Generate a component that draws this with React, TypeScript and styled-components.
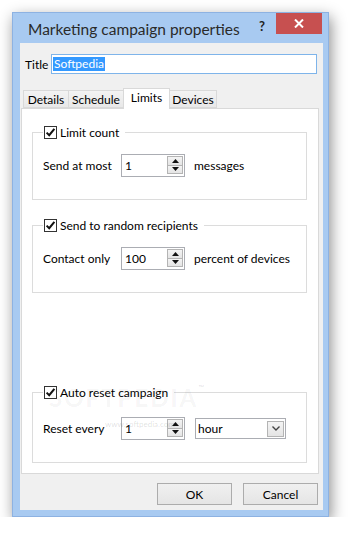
import React from 'react';
import styled, { createGlobalStyle } from 'styled-components';

const GlobalStyle = createGlobalStyle`
  html, body { margin: 0; padding: 0; background: #fff; }
  body { font-family: Lato, "Noto Sans", sans-serif; font-size: 12px; color: #000; }
  * { box-sizing: border-box; }
`;

// --- window frame ---
const Page = styled.div`
  padding: 12px 0 0 12px;
`;

const Window = styled.div`
  position: relative;
  width: 317px;
  height: 505px;
  display: flex;
  flex-direction: column;
  background: #a8caf1;
  border: 1px solid #8db2e2;
  box-shadow: 2px 5px 14px rgba(0, 0, 0, 0.45);
`;

const TitleBar = styled.div`
  height: 30px;
  display: flex;
  align-items: flex-start;
  padding-left: 15px;
`;

const Caption = styled.div`
  flex: 1;
  font-size: 15.5px;
  line-height: 30px;
  padding-top: 1px;
  color: #2a2a2a;
`;

const HelpButton = styled.div`
  margin: 5px 11px 0 0;
  font-size: 13px;
  font-weight: 700;
  color: #222;
`;

const CloseButton = styled.div`
  width: 46px;
  height: 21px;
  margin-right: 6px;
  background: #c75050;
  display: flex;
  align-items: center;
  justify-content: center;
`;

const Client = styled.div`
  flex: 1;
  margin: 0 5px 6px 7px;
  background: #f0f0f0;
  display: flex;
  flex-direction: column;
`;

// --- title row ---
const TitleRow = styled.div`
  display: flex;
  align-items: center;
  padding: 11px 6px 0 5px;
`;

const TitleLabel = styled.span`
  width: 26px;
`;

const TitleInput = styled.div`
  flex: 1;
  height: 20px;
  border: 1px solid #7eb4ea;
  background: #fff;
  display: flex;
  align-items: center;
  padding-left: 1px;
`;

const Selection = styled.span`
  background: #3399ff;
  color: #fff;
  padding: 0 1px;
  line-height: 14px;
`;

// --- tabs ---
const TabStrip = styled.div`
  position: relative;
  z-index: 1;
  margin-top: 14px;
  height: 20px;
  padding-left: 3px;
  display: flex;
  align-items: flex-end;
`;

const Tab = styled.div<{ $w: number; $active?: boolean }>`
  width: ${p => p.$w}px;
  height: ${p => (p.$active ? 21 : 18)}px;
  margin-bottom: ${p => (p.$active ? -1 : 0)}px;
  margin-left: -1px;
  border: 1px solid #d9d9d9;
  border-bottom: ${p => (p.$active ? 'none' : '1px solid #d9d9d9')};
  background: ${p => (p.$active ? '#fff' : 'linear-gradient(#f3f3f3, #e8e8e8)')};
  display: flex;
  align-items: center;
  justify-content: center;
  padding-bottom: ${p => (p.$active ? 3 : 0)}px;
  &:first-child { margin-left: 0; }
`;

const TabPanel = styled.div`
  height: 366px;
  margin: 0 4px 0 1px;
  background: #fff;
  border: 1px solid #d9d9d9;
  display: flex;
  flex-direction: column;
  padding: 16px 11px 10px 10px;
`;

// --- group boxes ---
const Group = styled.fieldset<{ $top?: number; $gap?: string }>`
  margin: 0;
  margin-top: ${p => p.$gap ?? '0'};
  padding: ${p => p.$top ?? 15}px 10px 22px 10px;
  border: 1px solid #dcdcdc;
  min-width: 0;
  flex: none;
`;

const Legend = styled.legend`
  padding: 0 6px 0 1px;
  height: 14px;
  display: flex;
  align-items: center;
  gap: 3px;
`;

const Row = styled.div`
  display: flex;
  align-items: center;
`;

const FieldLabel = styled.span`
  width: 78px;
`;

const Unit = styled.span`
  margin-left: 9px;
`;

// --- spin box ---
const SpinBox = styled.div`
  width: 64px;
  height: 23px;
  border: 1px solid #abadb3;
  background: #fff;
  display: flex;
`;

const SpinValue = styled.span`
  flex: 1;
  padding-left: 3px;
  line-height: 21px;
`;

const SpinButtons = styled.div`
  width: 17px;
  display: flex;
  flex-direction: column;
  padding: 1px 1px 2px 0;
`;

const SpinButton = styled.div<{ $lower?: boolean }>`
  flex: 1;
  border: 1px solid #b4b4b4;
  border-top: ${p => (p.$lower ? 'none' : '1px solid #b4b4b4')};
  background: linear-gradient(#f4f4f4, #e4e4e4);
  display: flex;
  align-items: center;
  justify-content: center;
`;

// --- combo box ---
const Combo = styled.div`
  width: 91px;
  height: 21px;
  margin-left: 10px;
  border: 1px solid #abadb3;
  background: #fff;
  display: flex;
  align-items: center;
  padding: 0 1px 0 2px;
`;

const ComboText = styled.span`
  flex: 1;
`;

const ComboDrop = styled.div`
  width: 17px;
  height: 16px;
  border: 1px solid #b4b4b4;
  background: linear-gradient(#f4f4f4, #e4e4e4);
  display: flex;
  align-items: center;
  justify-content: center;
`;

// --- footer ---
const Footer = styled.div`
  flex: 1;
  display: flex;
  justify-content: flex-end;
  align-items: flex-start;
  gap: 11px;
  padding: 9px 5px 0 0;
`;

const Button = styled.div`
  width: 75px;
  height: 22px;
  border: 1px solid #acacac;
  background: linear-gradient(#f0f0f0, #e5e5e5);
  display: flex;
  align-items: center;
  justify-content: center;
`;

// --- watermark ---
const Watermark = styled.div`
  position: absolute;
  left: 36px;
  top: 370px;
  font-size: 24px;
  font-weight: 700;
  letter-spacing: 2px;
  color: rgba(0, 0, 0, 0.05);
  pointer-events: none;
  sup { font-size: 8px; font-weight: 400; color: rgba(0, 0, 0, 0.12); vertical-align: top; }
`;

const WatermarkUrl = styled.div`
  position: absolute;
  left: 92px;
  top: 406px;
  font-size: 8px;
  color: rgba(0, 0, 0, 0.14);
  pointer-events: none;
`;

const CheckBox = () => (
  <svg width="13" height="13" viewBox="0 0 13 13">
    <rect x="0.5" y="0.5" width="12" height="12" fill="#fff" stroke="#333" />
    <path d="M2.6 6.6 L5.2 9.2 L10.4 2.8" fill="none" stroke="#111" strokeWidth="2" />
  </svg>
);

const Arrow = ({ up }: { up?: boolean }) => (
  <svg width="7" height="4" viewBox="0 0 7 4">
    <path d={up ? 'M0 4 L3.5 0 L7 4 Z' : 'M0 0 L7 0 L3.5 4 Z'} fill="#111" />
  </svg>
);

const Spin = ({ value }: { value: string }) => (
  <SpinBox>
    <SpinValue>{value}</SpinValue>
    <SpinButtons>
      <SpinButton><Arrow up /></SpinButton>
      <SpinButton $lower><Arrow /></SpinButton>
    </SpinButtons>
  </SpinBox>
);

export default function App() {
  return (
    <Page>
      <GlobalStyle />
      <Window>
        <TitleBar>
          <Caption>Marketing campaign properties</Caption>
          <HelpButton>?</HelpButton>
          <CloseButton>
            <svg width="10" height="9" viewBox="0 0 10 9">
              <path d="M1 0.5 L9 8.5 M9 0.5 L1 8.5" stroke="#fff" strokeWidth="2" />
            </svg>
          </CloseButton>
        </TitleBar>

        <Client>
          <TitleRow>
            <TitleLabel>Title</TitleLabel>
            <TitleInput>
              <Selection>Softpedia</Selection>
            </TitleInput>
          </TitleRow>

          <TabStrip>
            <Tab $w={46}>Details</Tab>
            <Tab $w={56}>Schedule</Tab>
            <Tab $w={47} $active>Limits</Tab>
            <Tab $w={48}>Devices</Tab>
          </TabStrip>

          <TabPanel>
            <Group>
              <Legend><CheckBox />Limit count</Legend>
              <Row>
                <FieldLabel>Send at most</FieldLabel>
                <Spin value="1" />
                <Unit>messages</Unit>
              </Row>
            </Group>

            <Group $gap="18px">
              <Legend><CheckBox />Send to random recipients</Legend>
              <Row>
                <FieldLabel>Contact only</FieldLabel>
                <Spin value="100" />
                <Unit>percent of devices</Unit>
              </Row>
            </Group>

            <Group $gap="auto" $top={18}>
              <Legend><CheckBox />Auto reset campaign</Legend>
              <Row>
                <FieldLabel>Reset every</FieldLabel>
                <Spin value="1" />
                <Combo>
                  <ComboText>hour</ComboText>
                  <ComboDrop>
                    <svg width="8" height="5" viewBox="0 0 8 5">
                      <path d="M0.5 0.5 L4 4 L7.5 0.5" fill="none" stroke="#444" strokeWidth="1.4" />
                    </svg>
                  </ComboDrop>
                </Combo>
              </Row>
            </Group>
          </TabPanel>

          <Footer>
            <Button>OK</Button>
            <Button>Cancel</Button>
          </Footer>
        </Client>

        <Watermark>SOFTPEDIA<sup>™</sup></Watermark>
        <WatermarkUrl>www.softpedia.com</WatermarkUrl>
      </Window>
    </Page>
  );
}
